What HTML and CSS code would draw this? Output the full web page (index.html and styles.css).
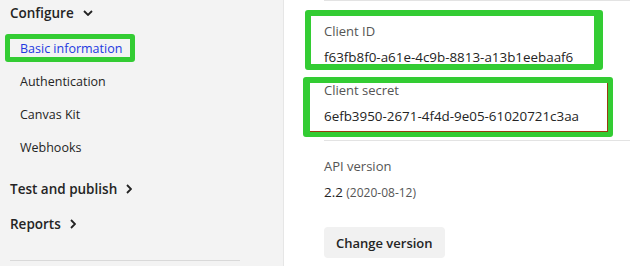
FILE: index.html
```html
<!DOCTYPE html>
<html lang="en">
<head>
    <meta charset="UTF-8">
    <meta name="viewport" content="width=device-width, initial-scale=1.0">
    <title>App settings</title>
    <link rel="stylesheet" href="styles.css">
</head>
<body>
    <nav class="sidebar">
        <div class="nav-section">
            <span>Configure</span>
            <svg class="chevron-down" width="10" height="6" viewBox="0 0 10 6"><polyline points="1,1 5,5 9,1" fill="none" stroke="#222" stroke-width="1.8"/></svg>
        </div>
        <ul class="nav-list">
            <li class="nav-item active">
                Basic information
                <span class="mark mark-nav"></span>
            </li>
            <li class="nav-item">Authentication</li>
            <li class="nav-item">Canvas Kit</li>
            <li class="nav-item">Webhooks</li>
        </ul>
        <div class="nav-section spaced">
            <span>Test and publish</span>
            <svg class="chevron-right" width="6" height="10" viewBox="0 0 6 10"><polyline points="1,1 5,5 1,9" fill="none" stroke="#222" stroke-width="1.8"/></svg>
        </div>
        <div class="nav-section">
            <span>Reports</span>
            <svg class="chevron-right" width="6" height="10" viewBox="0 0 6 10"><polyline points="1,1 5,5 1,9" fill="none" stroke="#222" stroke-width="1.8"/></svg>
        </div>
        <hr class="nav-rule">
    </nav>

    <main class="content">
        <div class="rule"></div>

        <div class="field first">
            <div class="field-label">Client ID</div>
            <div class="field-value">f63fb8f0-a61e-4c9b-8813-a13b1eebaaf6</div>
            <span class="mark mark-id"></span>
        </div>

        <div class="field">
            <div class="field-label">Client secret</div>
            <div class="field-value">6efb3950-2671-4f4d-9e05-61020721c3aa</div>
            <span class="mark mark-secret"></span>
        </div>

        <div class="rule section-rule"></div>

        <div class="field api">
            <div class="field-label">API version</div>
            <div class="field-value">2.2 <span class="date">(2020-08-12)</span></div>
        </div>

        <button class="btn">Change version</button>
    </main>
</body>
</html>
```

FILE: styles.css
```css
:root {
    --mark-color: #33cc33;
    --text-color: #242424;
    --muted-color: #555;
    --rule-color: #e3e3e3;
    --sidebar-bg: #f3f3f3;
}

* {
    margin: 0;
    padding: 0;
    box-sizing: border-box;
}

body {
    font-family: 'Open Sans', 'Noto Sans', sans-serif;
    font-size: 13px;
    color: var(--text-color);
    background-color: #fff;
    display: flex;
    height: 266px;
    overflow: hidden;
}

/* Sidebar */

.sidebar {
    width: 284px;
    flex-shrink: 0;
    background-color: var(--sidebar-bg);
    border-right: 1px solid #e6e6e6;
    padding-left: 10px;
}

.nav-section {
    height: 26px;
    display: flex;
    align-items: center;
    gap: 9px;
    font-size: 13.5px;
    font-weight: 600;
}

.nav-section.spaced {
    margin-top: 10px;
    height: 30px;
}

.nav-section.spaced + .nav-section {
    margin-top: 5px;
    height: 30px;
}

.nav-list {
    list-style: none;
    margin-top: 6px;
}

.nav-item {
    position: relative;
    height: 33px;
    display: flex;
    align-items: center;
    padding-left: 10px;
    font-size: 12.5px;
}

.nav-item.active {
    color: #2238e0;
}

.nav-rule {
    border: none;
    border-top: 1px solid #d9d9d9;
    width: 230px;
    margin-top: 21px;
}

/* Content */

.content {
    flex-grow: 1;
    padding-left: 40px;
}

.rule {
    height: 1px;
    background-color: var(--rule-color);
}

.field {
    position: relative;
    margin-top: 13px;
}

.field.first {
    margin-top: 20px;
}

.field-label,
.field-value {
    line-height: 20px;
}

.field-label {
    color: var(--muted-color);
}

.field-value {
    margin-top: 6px;
    font-size: 13.4px;
}

.date {
    font-size: 12px;
    color: var(--muted-color);
}

.section-rule {
    margin-top: 14px;
}

.field.api {
    margin-top: 15px;
}

.btn {
    margin-top: 24px;
    height: 31px;
    padding: 0 12px;
    border: none;
    border-radius: 4px;
    background-color: #f1f1f1;
    font-family: inherit;
    font-size: 13px;
    font-weight: 600;
    color: var(--text-color);
}

/* Highlight marks drawn over the screenshot */

.mark {
    position: absolute;
    border: 5px solid var(--mark-color);
    border-radius: 3px;
    pointer-events: none;
}

.mark-nav {
    left: -5px;
    top: 2px;
    width: 130px;
    height: 28px;
}

.mark-id {
    left: -19px;
    top: -11px;
    width: 298px;
    height: 60px;
    border-width: 6px 9px 6px 6px;
}

.mark-secret {
    left: -21px;
    top: -3px;
    width: 310px;
    height: 60px;
    border-width: 6px 5px 5px 7px;
    box-shadow: inset -1px -1px 0 #9a3b10;
}
```
